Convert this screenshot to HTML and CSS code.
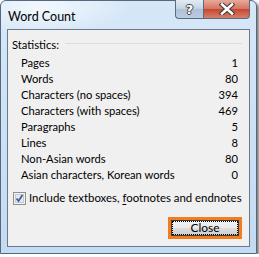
FILE: index.html
```html
<!DOCTYPE html>
<html lang="en">
<head>
  <meta charset="UTF-8" />
  <title>Word Count</title>
  <link rel="stylesheet" href="styles.css">
</head>
<body>
  <div class="window">
    <div class="titlebar">
      <span class="title">Word Count</span>
      <div class="caption-btns">
        <span class="cap help">?</span>
        <span class="cap close">
          <svg width="16" height="12" viewBox="0 0 16 12">
            <path d="M3 1.5 L13 10.5 M13 1.5 L3 10.5" stroke="#3b3b3b" stroke-width="4.6" stroke-linecap="square" fill="none"/>
            <path d="M3 1.5 L13 10.5 M13 1.5 L3 10.5" stroke="#fff" stroke-width="2.6" stroke-linecap="square" fill="none"/>
          </svg>
        </span>
      </div>
    </div>

    <div class="client">
      <div class="section">
        <span>Statistics:</span>
        <span class="rule"></span>
      </div>

      <div class="stats">
        <div class="row"><span>Pages</span><span>1</span></div>
        <div class="row"><span>Words</span><span>80</span></div>
        <div class="row"><span>Characters (no spaces)</span><span>394</span></div>
        <div class="row"><span>Characters (with spaces)</span><span>469</span></div>
        <div class="row"><span>Paragraphs</span><span>5</span></div>
        <div class="row"><span>Lines</span><span>8</span></div>
        <div class="row"><span>Non-Asian words</span><span>80</span></div>
        <div class="row"><span>Asian characters, Korean words</span><span>0</span></div>
      </div>

      <label class="check">
        <svg class="box" width="13" height="13" viewBox="0 0 13 13">
          <rect x="0.5" y="0.5" width="12" height="12" fill="#f4f4f4" stroke="#8f8f8f"/>
          <rect x="2.5" y="2.5" width="8" height="8" fill="#e6eaf0" stroke="#c4c9d0"/>
          <path d="M3.5 6.5 L5.5 9 L9.5 3" stroke="#3d5a9e" stroke-width="1.7" fill="none"/>
        </svg>
        <span>Include textboxes, <u>f</u>ootnotes and endnotes</span>
      </label>

      <div class="actions">
        <div class="highlight">
          <div class="btn"><span class="focus">Close</span></div>
        </div>
      </div>
    </div>
  </div>
</body>
</html>
```

FILE: styles.css
```css
body {
  margin: 0;
  background: #fff;
  font-family: Lato, "Liberation Sans", sans-serif;
  font-size: 11.2px;
  color: #000;
}

.window {
  width: 255px;
  height: 252px;
  border: 1px solid #55687e;
  border-radius: 6px 6px 0 0;
  background:
    radial-gradient(ellipse 90px 30px at 40px 6px, rgba(255,255,255,0.7), rgba(255,255,255,0)),
    linear-gradient(#d6e7f8, #c3dbf3);
  box-shadow: 2px 2px 3px rgba(0, 0, 0, 0.55);
  display: flex;
  flex-direction: column;
}

.titlebar {
  height: 28px;
  display: flex;
  justify-content: space-between;
  align-items: flex-start;
}

.title {
  font-size: 12.5px;
  margin: 8px 0 0 7px;
  color: #000;
}

.caption-btns {
  display: flex;
  margin-right: 6px;
  margin-top: -1px;
}

.cap {
  height: 19px;
  display: flex;
  align-items: center;
  justify-content: center;
  border: 1px solid #5a6b80;
  border-top: none;
  box-sizing: border-box;
}

.help {
  width: 28px;
  border-radius: 0 0 0 4px;
  border-right: none;
  background: linear-gradient(#e1ebf5, #c3d3e4 50%, #afc1d6 51%, #b9cce0);
  color: #fff;
  font-family: "DejaVu Sans", sans-serif;
  font-weight: bold;
  font-size: 13px;
  text-shadow: 1px 0 #444, -1px 0 #444, 0 1px #444, 0 -1px #444;
}

.close {
  width: 47px;
  border-radius: 0 0 4px 0;
  background: linear-gradient(#e9a99a, #d2735f 50%, #c7462f 51%, #d6806b);
}

.client {
  flex: 1;
  margin: 0 6px 6px;
  border: 1px solid #6d7888;
  background: #f0f0f0;
  padding: 7px 7px 0 4px;
  display: flex;
  flex-direction: column;
}

.section {
  display: flex;
  align-items: center;
  line-height: 16px;
}

.rule {
  flex: 1;
  height: 1px;
  background: #d5dfe5;
  margin: -3px 0 0 6px;
}

.stats {
  margin: 2px 4px 0 9px;
}

.row {
  display: flex;
  justify-content: space-between;
  line-height: 16px;
}

.check {
  display: flex;
  align-items: center;
  line-height: 16px;
  margin-top: 7px;
  padding-left: 1px;
  white-space: nowrap;
  font-size: 11.4px;
}

.check .box {
  flex: none;
  margin-right: 3px;
}

.check u {
  text-underline-offset: 2px;
}

.actions {
  display: flex;
  justify-content: flex-end;
  margin-top: 11px;
}

.highlight {
  border: 3px solid #f47c20;
  width: 68px;
  height: 16px;
  display: flex;
}

.btn {
  flex: 1;
  border: 1px solid #3c3c3c;
  background: linear-gradient(#f2f2f2, #ebebeb 50%, #dddddd 51%, #cfcfcf);
  display: flex;
}

.btn .focus {
  flex: 1;
  border: 1px dotted #000;
  display: flex;
  align-items: center;
  justify-content: center;
  line-height: 12px;
  font-size: 12px;
}
```
